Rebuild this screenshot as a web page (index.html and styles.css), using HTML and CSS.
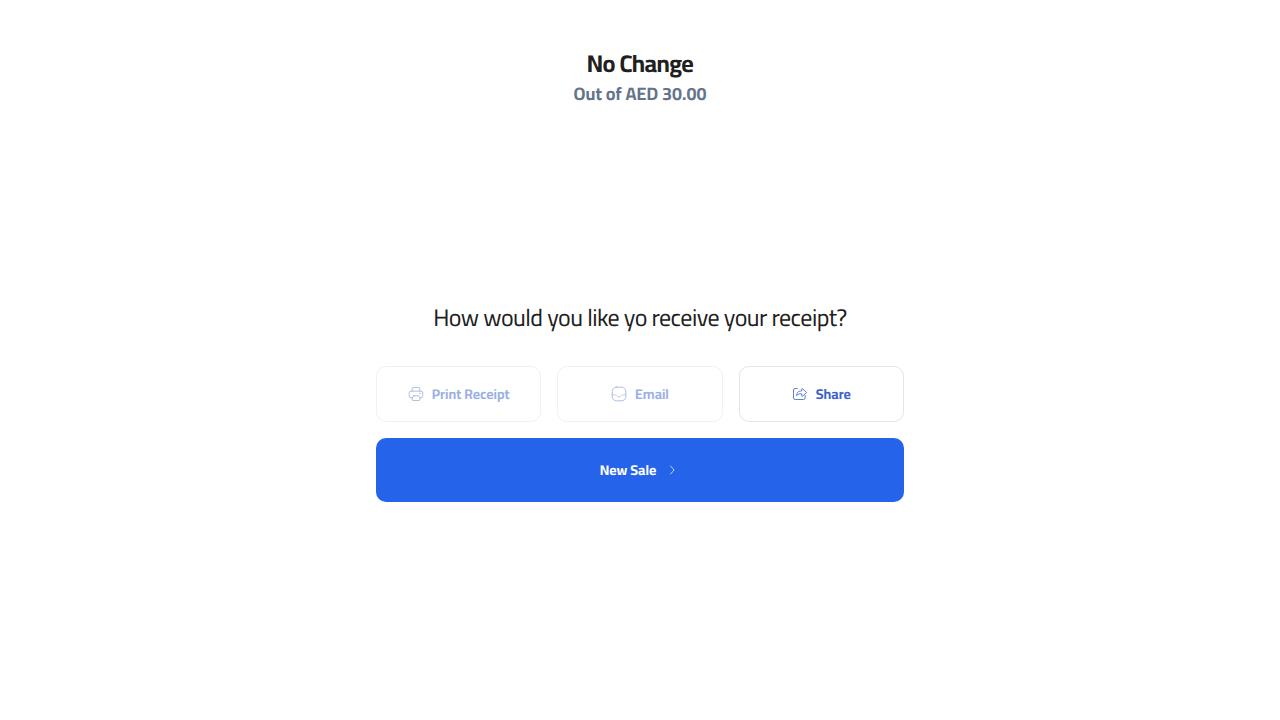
FILE: index.html
```html
<!DOCTYPE html>
<html lang="en">
<head>
<meta charset="utf-8">
<title>Payment complete</title>
<link rel="stylesheet" href="styles.css">
</head>
<body>
<main class="checkout">
  <header class="summary">
    <h1 class="summary-title">No Change</h1>
    <p class="summary-total">Out of AED 30.00</p>
  </header>
  <section class="receipt">
    <h2 class="question">How would you like yo receive your receipt?</h2>
    <div class="options">
      <button class="option" disabled>
        <svg class="icon" viewBox="0 0 16 16"><path d="M4.2 5V2.6Q4.2 1.500 5.300 1.500h5.400q1.100 0 1.100 1.100V5M4 11.800H3q-1.800 0-1.800-1.800V7Q1.200 5.200 3 5.200h10q1.800 0 1.800 1.800v3q0 1.800-1.800 1.800h-1M5.700 9.800h4.600q.6 0 .8.500l.9 2.500q.4 1.500-1.100 1.700H5.100Q3.600 14.300 4 12.800l.9-2.500q.2-.5.8-.5zM11.500 7.500h.8"/></svg>
        <span class="label">Print Receipt</span>
      </button>
      <button class="option" disabled>
        <svg class="icon" viewBox="0 0 16 16"><rect x="1.2" y="1.2" width="13.6" height="13.6" rx="4.2"/><path class="faint" d="M1.2 8.800h3c1.200 0 1.400 2 3.800 2s2.600-2 3.800-2h3"/></svg>
        <span class="label">Email</span>
      </button>
      <button class="option">
        <svg class="icon" viewBox="0 0 16 16"><path d="M5.200 2.500H3Q1.500 2.500 1.500 4v7.800q0 1.700 1.700 1.700h8.300q1.700 0 1.700-1.700V9.500M4.700 9.300C4.700 6 6.500 5 9.700 5V3.200q0-1 .8-.3l3.800 3.200q.5.400 0 .8l-3.800 3.200q-.8.600-.8-.3V7.800C7.400 7.600 6 8 4.700 9.300z"/></svg>
        <span class="label">Share</span>
      </button>
    </div>
    <button class="new-sale">
      <span class="label">New Sale</span>
      <svg class="icon" viewBox="0 0 16 16"><path d="M6.600 4.200l2.900 2.900q.9.900 0 1.800l-2.900 2.900"/></svg>
    </button>
  </section>
</main>
</body>
</html>
```
FILE: styles.css
```css
* { box-sizing: border-box; }
body {
  margin: 0;
  background: #fff;
  color: #202020;
  font-family: Cairo, "Titillium Web", "Open Sans", "Noto Sans", sans-serif;
  text-rendering: geometricPrecision;
  -webkit-font-smoothing: antialiased;
}
.checkout {
  min-height: 720px;
  padding-top: 48px;
  display: flex;
  flex-direction: column;
  align-items: center;
}
.summary { text-align: center; white-space: nowrap; }
.summary-title {
  margin: 0;
  font-size: 24px;
  line-height: 32px;
  font-weight: 700;
  letter-spacing: -0.6px;
}
.summary-total {
  margin: 0;
  color: #64748b;
  font-size: 18px;
  line-height: 30px;
  font-weight: 700;
}
.receipt { width: 528px; margin-top: 192px; }
.question {
  margin: 0 0 32px;
  text-align: center;
  font-size: 24px;
  line-height: 32px;
  font-weight: 400;
  letter-spacing: -0.56px;
  white-space: nowrap;
}
.options {
  display: grid;
  grid-template-columns: repeat(3, 1fr);
  gap: 16px;
}
.option, .new-sale {
  display: flex;
  align-items: center;
  justify-content: center;
  gap: 8px;
  padding: 0;
  font: inherit;
  text-rendering: inherit;
}
.option {
  height: 56px;
  border: 1px solid #e2e4e8;
  border-radius: 10px;
  background: #fff;
  color: #3b65c8;
}
.option:disabled { opacity: 0.5; }
.label {
  font-size: 14px;
  line-height: 20px;
  font-weight: 700;
  white-space: nowrap;
}
.icon {
  width: 16px;
  height: 16px;
  flex: none;
  fill: none;
  stroke: currentColor;
  stroke-width: 0.82;
  stroke-linecap: round;
  stroke-linejoin: round;
}
.faint { opacity: 0.7; }
.new-sale {
  width: 100%;
  height: 64px;
  margin-top: 16px;
  border: 0;
  border-radius: 10px;
  background: #2563eb;
  color: #fff;
}
```
